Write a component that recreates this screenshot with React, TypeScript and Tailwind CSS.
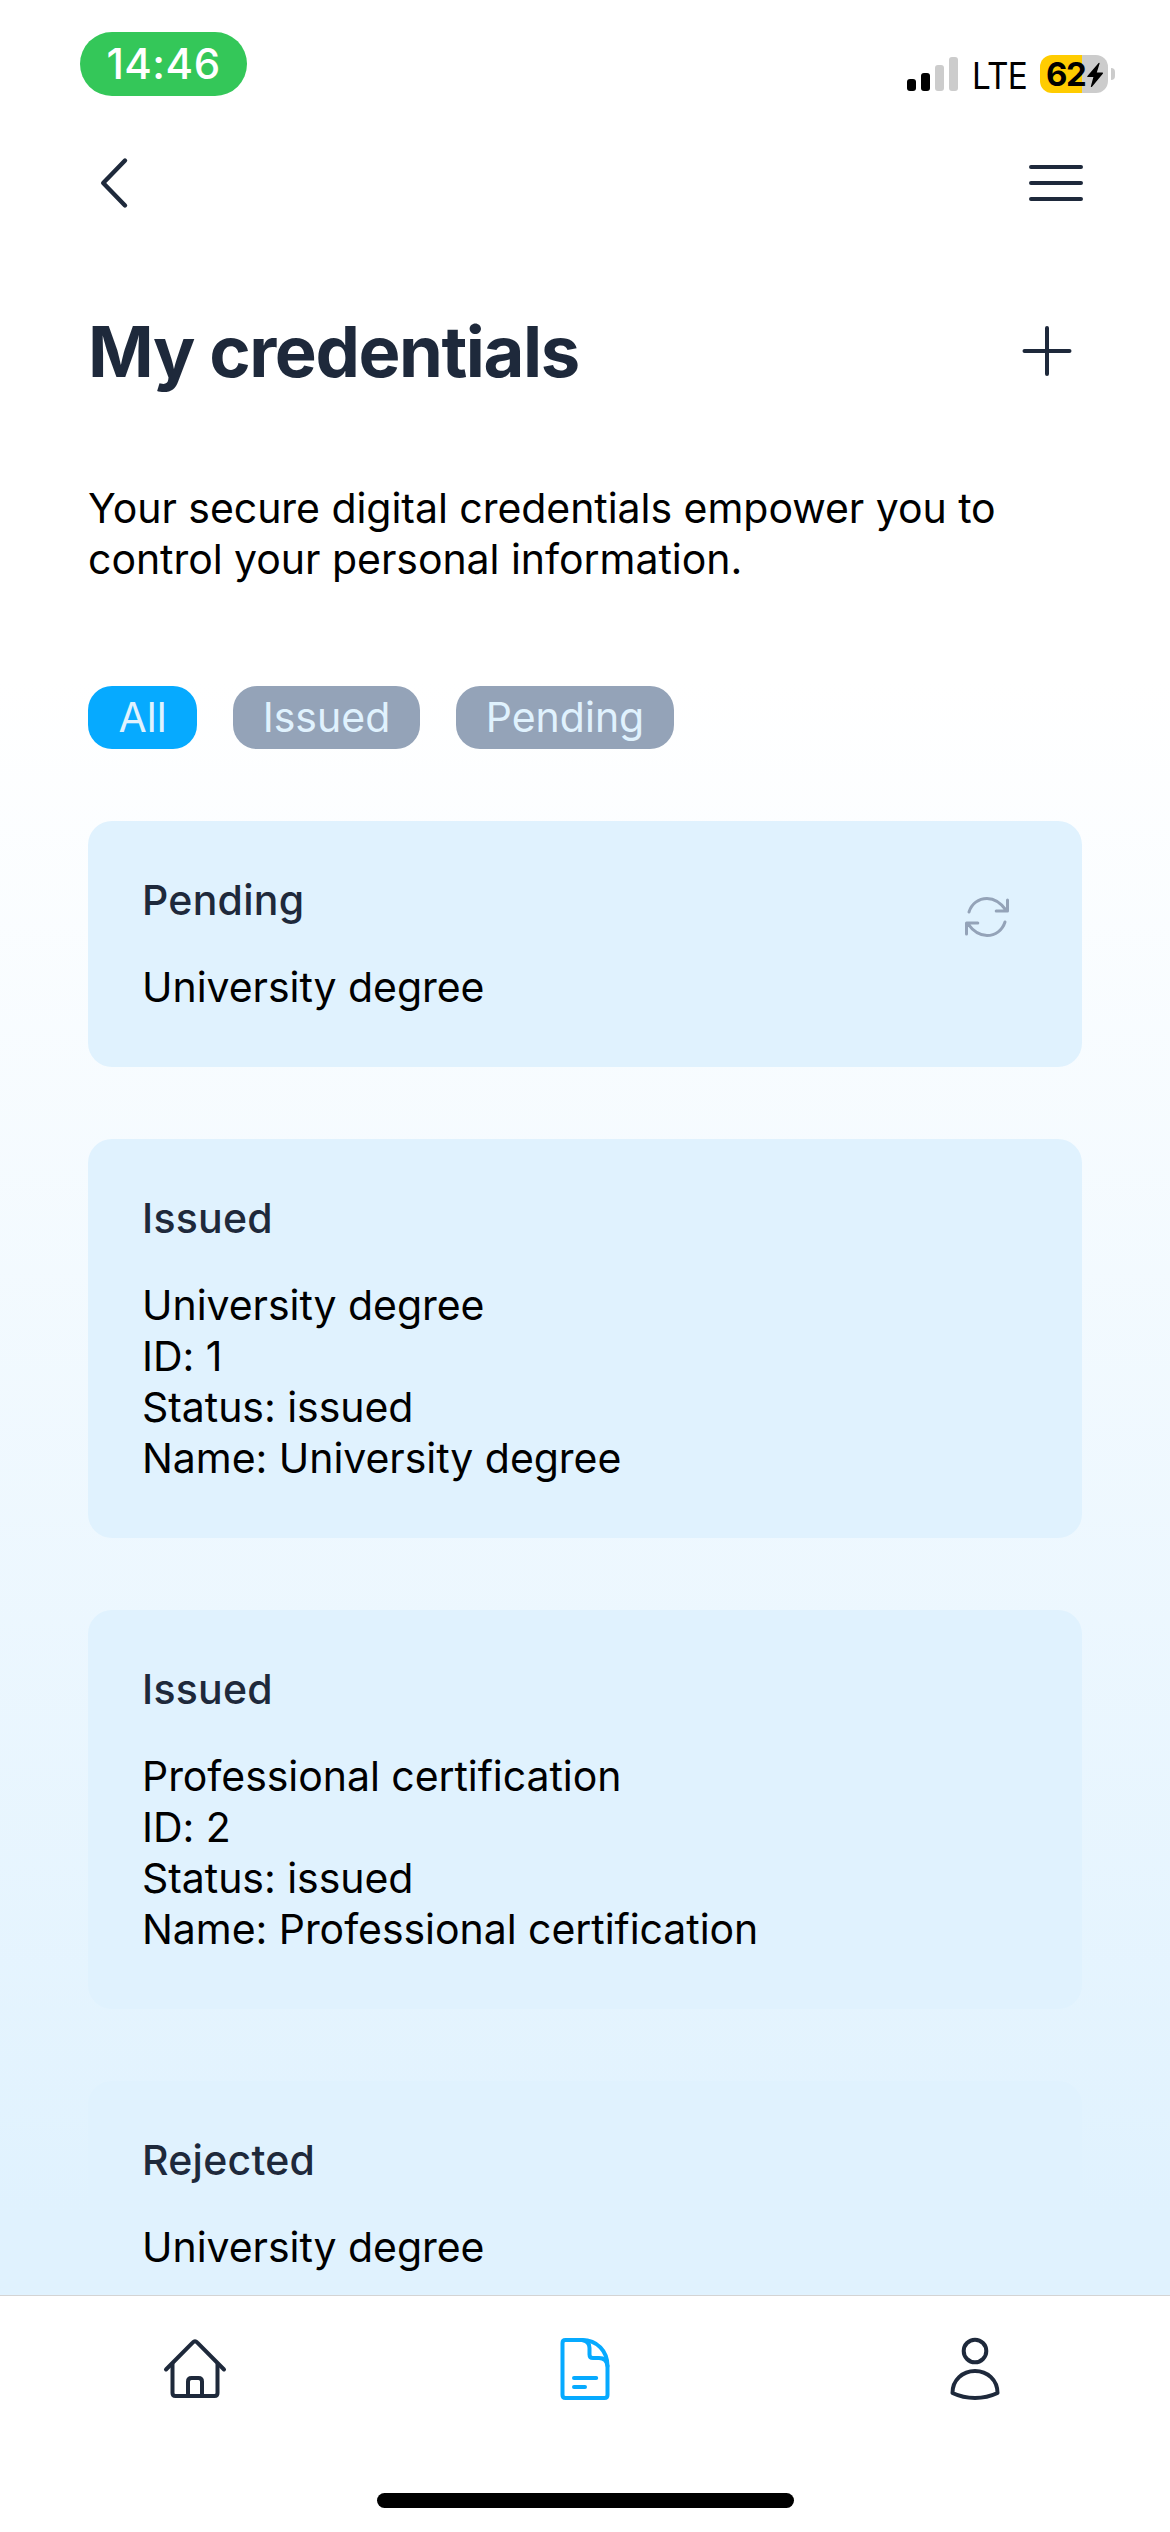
import React from "react";

type Credential = { title: string; lines: string[]; refreshable?: boolean };

const credentials: Credential[] = [
  { title: "Pending", lines: ["University degree"], refreshable: true },
  {
    title: "Issued",
    lines: ["University degree", "ID: 1", "Status: issued", "Name: University degree"],
  },
  {
    title: "Issued",
    lines: [
      "Professional certification",
      "ID: 2",
      "Status: issued",
      "Name: Professional certification",
    ],
  },
  { title: "Rejected", lines: ["University degree"] },
];

function SignalBars() {
  return (
    <div className="flex h-[34px] items-end gap-[5px]">
      <span className="h-3 w-[9px] rounded-[3px] bg-black" />
      <span className="h-[18px] w-[9px] rounded-[3px] bg-black" />
      <span className="h-[26px] w-[9px] rounded-[3px] bg-[#cccccc]" />
      <span className="h-[34px] w-[9px] rounded-[3px] bg-[#cccccc]" />
    </div>
  );
}

function Battery() {
  return (
    <div className="flex items-center gap-[3px]">
      <div className="flex h-[38px] w-[68px] items-center overflow-hidden rounded-[12px] bg-[linear-gradient(90deg,#ffcc00_42px,#cccccc_42px)] pl-[6px]">
        <span className="w-[40px] text-[33px] leading-[38px] font-bold tracking-[-1.4px]">62</span>
        <svg width="18" height="26" viewBox="0 0 18 26" className="mt-[1px] shrink-0">
          <path d="M12.6 1 L1.2 14.2 Q.8 15 1.8 15 H7.4 L4.8 24.4 Q5 25.6 6 24.8 L17 11.6 Q17.2 10.6 16.4 10.6 H10.8 L13.6 1.6 Q13.6 .4 12.6 1Z" />
        </svg>
      </div>
      <span className="h-3 w-1 rounded-r-full bg-[#cccccc]" />
    </div>
  );
}

function StatusBar() {
  return (
    <div className="flex h-[141px] items-start justify-between pr-[55px] pl-20">
      <div className="mt-8 flex h-16 w-[167px] items-center justify-center rounded-full bg-[#34c759] text-[42px] leading-none font-medium tracking-[0.5px] text-white">
        14:46
      </div>
      <div className="mt-[55px] flex">
        <div className="mt-[2px]">
          <SignalBars />
        </div>
        <span className="ml-[14px] h-[38px] w-[68px] origin-left scale-x-[.9] text-[37px] leading-[41px] tracking-[-0.8px]">
          LTE
        </span>
        <Battery />
      </div>
    </div>
  );
}

function Header() {
  return (
    <header className="flex h-[84px] items-center justify-between pr-[84px] pl-[96px] text-[#1e293b]">
      <svg width="36" height="54" viewBox="0 0 36 54" fill="none" stroke="currentColor" strokeWidth="4.4" strokeLinecap="round" strokeLinejoin="round">
        <path d="M29 4.5 7.2 27 29 49.5" />
      </svg>
      <svg width="60" height="42" viewBox="0 0 60 42" fill="none" stroke="currentColor" strokeWidth="4" strokeLinecap="round">
        <path d="M5 5H55M5 21H55M5 37H55" />
      </svg>
    </header>
  );
}

function RefreshIcon() {
  return (
    <svg className="mt-[18px] mr-[17px] shrink-0 text-[#94a3b8]" width="48" height="48" viewBox="0 0 48 48" fill="none" stroke="currentColor" strokeWidth="3" strokeLinecap="round" strokeLinejoin="round">
      <path d="M6 19C8.6 10.800 15.500 5.500 24 5.500C32.500 5.500 38 10 43.500 17.600M44.500 7V18H33.200" />
      <path d="M42 29C39.400 37.200 32.500 42.500 24 42.500C15.500 42.500 10 38 4.500 30.400M3.500 41V30H14.800" />
    </svg>
  );
}

function CredentialCard({ title, lines, refreshable }: Credential) {
  return (
    <article className="flex items-start justify-between rounded-[24px] bg-[#e0f2fe] p-[54px]">
      <div className="flex flex-col gap-9">
        <h2 className="font-medium tracking-[0.25px] text-[#1e293b]">{title}</h2>
        <div className="tracking-[-0.05px]">
          {lines.map((line) => (
            <p key={line}>{line}</p>
          ))}
        </div>
      </div>
      {refreshable && <RefreshIcon />}
    </article>
  );
}

function TabBar() {
  return (
    <nav className="flex h-[237px] shrink-0 flex-col items-center justify-between border-t border-[#d4d4d4] bg-white pt-[39px] pb-6">
      <div className="grid w-full grid-cols-3 justify-items-center text-[#1e293b]">
        <svg width="68" height="68" viewBox="0 0 68 68" fill="none" stroke="currentColor" strokeWidth="4" strokeLinecap="round" strokeLinejoin="round">
          <path d="M5 34.500 31.900 7.300Q34 5 36.100 7.300L63 34.500" />
          <path d="M11.500 29V58Q11.500 61 14.500 61H53.500Q56.500 61 56.500 58V29" />
          <path d="M27 60V46.500Q27 43 30.500 43H37.500Q41 43 41 46.500V60" />
        </svg>
        <svg className="text-[#06aaff]" width="68" height="68" viewBox="0 0 68 68" fill="none" stroke="currentColor" strokeWidth="4" strokeLinecap="round" strokeLinejoin="round">
          <path d="M14.500 5H31C46 5 56.500 16 56.500 31V60Q56.500 63 53.500 63H14.500Q11.500 63 11.500 60V8Q11.500 5 14.500 5Z" />
          <path d="M31 5Q38.500 6 38.500 13V19.500Q38.500 23 42 23H48Q55.500 23 56.500 31" />
          <path d="M23 43H45.200M23 52H34" />
        </svg>
        <svg width="68" height="68" viewBox="0 0 68 68" fill="none" stroke="currentColor" strokeWidth="4" strokeLinejoin="round">
          <circle cx="34" cy="16" r="11.300" />
          <path d="M11.500 58C11.500 45 21.500 36 34 36S56.500 45 56.500 58Q46 63 34 63T11.500 58Z" />
        </svg>
      </div>
      <div className="h-[15px] w-[417px] rounded-full bg-black" />
    </nav>
  );
}

export default function App() {
  return (
    <div className="flex h-[2532px] w-[1170px] flex-col overflow-hidden bg-[linear-gradient(180deg,#ffffff_680px,#e0f2fe_2210px)] font-[Inter,sans-serif] text-[41px] leading-[51px] text-black">
      <StatusBar />
      <Header />
      <main className="min-h-0 flex-1 overflow-hidden px-[88px] pt-[85px]">
        <div className="flex h-[84px] items-center justify-between pr-[7px] text-[#1e293b]">
          <h1 className="text-[70.5px] leading-[84px] font-bold tracking-[-1.43px]">My credentials</h1>
          <svg width="56" height="56" viewBox="0 0 56 56" fill="none" stroke="currentColor" strokeWidth="4" strokeLinecap="round">
            <path d="M28 4V50M5.500 27H50.500" />
          </svg>
        </div>
        <p className="mt-[89px] w-[960px] tracking-[-0.04px]">
          Your secure digital credentials empower you to
          <br />
          control your personal information.
        </p>
        <div className="mt-[101px] flex gap-9 text-center text-[#e0f2fe]">
          <button className="h-[63px] w-[109px] rounded-[24px] bg-[#06aaff]">All</button>
          <button className="h-[63px] w-[187px] rounded-[24px] bg-[#94a3b8]">Issued</button>
          <button className="h-[63px] w-[218px] rounded-[24px] bg-[#94a3b8]">Pending</button>
        </div>
        <div className="mt-[72px] flex w-[994px] flex-col gap-[72px]">
          {credentials.map((c, i) => (
            <CredentialCard key={i} {...c} />
          ))}
        </div>
      </main>
      <TabBar />
    </div>
  );
}
